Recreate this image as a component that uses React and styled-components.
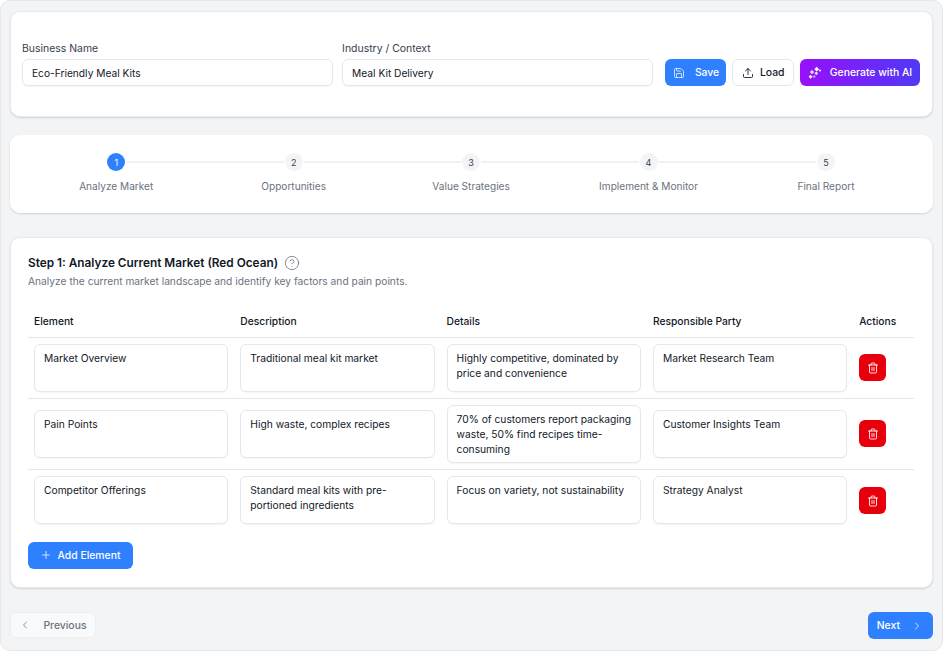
import React from 'react';
import styled, { createGlobalStyle } from 'styled-components';
import { Save, Upload, CircleHelp, Trash2, Plus, ChevronLeft, ChevronRight } from 'lucide-react';

const GlobalStyle = createGlobalStyle`
  html, body { margin: 0; padding: 0; background: #fff; }
  body { font-family: Inter, 'Liberation Sans', sans-serif; font-size: 11px; color: #111827; }
  * { box-sizing: border-box; }
`;

const Page = styled.div`
  width: 943px;
  height: 651px;
  background: #f3f4f6;
  border: 1px solid #e5e7eb;
  border-radius: 10px;
  padding: 10px 9.3px 12px 8.5px;
  overflow: hidden;
`;

const Card = styled.section`
  background: #fff;
  border-radius: 10px;
  border: 1px solid #e9eaee;
  box-shadow: 0 1px 2px rgba(0, 0, 0, 0.14);
`;

const Header = styled(Card)`
  height: 106px;
  padding: 0 11.5px 30px 11.5px;
  display: flex;
  align-items: flex-end;
  gap: 12px;
`;

const Fields = styled.div`
  flex: 1;
  display: flex;
  gap: 9px;
`;

const Field = styled.label`
  flex: 1;
  display: flex;
  flex-direction: column;
  gap: 2px;
  font-size: 10.45px;
  line-height: 16px;
  color: #374151;
`;

const TextInput = styled.input`
  height: 27px;
  border: 1px solid #e5e7eb;
  border-radius: 6px;
  padding: 0 9px;
  font: 10.2px Inter, sans-serif;
  color: #111827;
  box-shadow: 0 1px 1px rgba(0, 0, 0, 0.04);
  outline: none;
`;

const Actions = styled.div`
  display: flex;
  gap: 6px;
`;

const Button = styled.button`
  height: 27px;
  border-radius: 6px;
  border: ${p => (p.$variant === 'white' ? '1px solid #e5e7eb' : 'none')};
  padding: ${p => p.$pad || '0 8px'};
  display: inline-flex;
  align-items: center;
  justify-content: ${p => (p.$variant === 'white' ? 'center' : 'space-between')};
  gap: ${p => p.$gap || 6}px;
  width: ${p => p.$width}px;
  font: 500 10.4px Inter, sans-serif;
  color: ${p => (p.$variant === 'white' ? '#111827' : '#fff')};
  background: ${p =>
    p.$variant === 'white' ? '#fff' : p.$variant === 'ai' ? 'linear-gradient(90deg, #9810fa, #4f39f6)' : '#2f80ff'};
`;

const Steps = styled(Card)`
  margin-top: 18px;
  height: 78px;
  padding: 17px 17px 0;
  border-color: #fff;
  display: flex;
`;

const Step = styled.div`
  position: relative;
  flex: 1;
  display: flex;
  flex-direction: column;
  align-items: center;
  gap: 8px;
`;

const Connector = styled.span`
  position: absolute;
  top: 8px;
  left: calc(50% + 10px);
  width: calc(100% - 20px);
  height: 2px;
  background: #f0f1f3;
`;

const Dot = styled.span`
  width: 18px;
  height: 18px;
  border-radius: 50%;
  display: flex;
  align-items: center;
  justify-content: center;
  font-size: 9px;
  background: ${p => (p.$active ? '#2f80ff' : '#f3f4f6')};
  color: ${p => (p.$active ? '#fff' : '#374151')};
`;

const StepLabel = styled.span`
  font-size: 10.1px;
  line-height: 14px;
  color: #6b7280;
`;

const Main = styled(Card)`
  margin-top: 24px;
  height: 351px;
  padding: 16px 17.5px;
`;

const TitleRow = styled.div`
  display: flex;
  align-items: center;
  gap: 6px;
`;

const Title = styled.h2`
  margin: 0;
  font-size: 11.8px;
  line-height: 18px;
  font-weight: 600;
`;

const Subtitle = styled.p`
  margin: 1px 0 0;
  font-size: 10.23px;
  line-height: 16px;
  color: #6b7280;
`;

const Table = styled.table`
  width: 886px;
  margin-top: 16px;
  border-collapse: collapse;
  table-layout: fixed;
`;

const Th = styled.th`
  text-align: left;
  font-size: 10.25px;
  font-weight: 500;
  color: #111827;
  height: 32px;
  padding: 1px 6px 0;
  border-bottom: 1px solid #e5e7eb;
`;

const Tr = styled.tr`
  border-bottom: 1px solid #e5e7eb;
  &:last-child { border-bottom: none; }
  &:last-child td { padding-bottom: 8px; }
  &:last-child td:last-child { padding: 7px 6px; }
`;

const Td = styled.td`
  padding: 6px;
  vertical-align: middle;
`;

const Area = styled.textarea`
  display: block;
  width: 100%;
  height: ${p => p.$height}px;
  resize: none;
  border: 1px solid #e5e7eb;
  border-radius: 6px;
  padding: 6px 6px 6px 9px;
  font: 10.25px/15px Inter, sans-serif;
  color: #111827;
  outline: none;
  overflow: hidden;
  box-shadow: 0 1px 1px rgba(0, 0, 0, 0.04);
`;

const DeleteButton = styled.button`
  width: 27px;
  height: 27px;
  border: none;
  border-radius: 6px;
  background: #e7000b;
  color: #fff;
  display: flex;
  align-items: center;
  justify-content: center;
  padding: 0;
`;

const AddButton = styled(Button)`
  margin-top: 10px;
  justify-content: center;
`;

const Footer = styled.div`
  margin-top: 24px;
  display: flex;
  justify-content: space-between;
`;

const PrevButton = styled.button`
  width: 86px;
  height: 26px;
  border: 1px solid #eceef1;
  border-radius: 6px;
  background: #f9fafb;
  color: #6b7280;
  padding: 0 8px;
  display: flex;
  align-items: center;
  justify-content: space-between;
  font: 500 10.4px Inter, sans-serif;
`;

const SparkIcon = () => (
  <svg width="14" height="14" viewBox="0 0 14 14" fill="currentColor">
    <rect x="7" y="1.5" width="3.4" height="3.4" transform="rotate(45 8.7 3.2)" />
    <rect x="2.5" y="4.6" width="3" height="3" transform="rotate(45 4 6.1)" opacity="0.85" />
    <rect x="7" y="6" width="2.6" height="2.6" transform="rotate(45 8.3 7.3)" opacity="0.85" />
    <rect x="1.2" y="9.4" width="2.8" height="2.8" transform="rotate(45 2.6 10.8)" />
    <rect x="5.2" y="9.6" width="2" height="2" transform="rotate(45 6.2 10.6)" opacity="0.7" />
    <circle cx="12" cy="4.5" r="1" />
  </svg>
);

const steps = ['Analyze Market', 'Opportunities', 'Value Strategies', 'Implement & Monitor', 'Final Report'];

const rows = [
  ['Market Overview', 'Traditional meal kit market', 'Highly competitive, dominated by price and convenience', 'Market Research Team'],
  ['Pain Points', 'High waste, complex recipes', '70% of customers report packaging waste, 50% find recipes time-consuming', 'Customer Insights Team'],
  ['Competitor Offerings', 'Standard meal kits with pre-portioned ingredients', 'Focus on variety, not sustainability', 'Strategy Analyst'],
];

export default function App() {
  return (
    <Page>
      <GlobalStyle />
      <Header>
        <Fields>
          <Field>
            Business Name
            <TextInput defaultValue="Eco-Friendly Meal Kits" />
          </Field>
          <Field>
            Industry / Context
            <TextInput defaultValue="Meal Kit Delivery" />
          </Field>
        </Fields>
        <Actions>
          <Button $width={61} $pad="0 7px 0 8px"><Save size={12} strokeWidth={1.5} />Save</Button>
          <Button $width={62} $variant="white"><Upload size={12} strokeWidth={1.75} />Load</Button>
          <Button $width={120} $variant="ai"><SparkIcon />Generate with AI</Button>
        </Actions>
      </Header>

      <Steps>
        {steps.map((label, i) => (
          <Step key={label}>
            {i < steps.length - 1 && <Connector />}
            <Dot $active={i === 0}>{i + 1}</Dot>
            <StepLabel>{label}</StepLabel>
          </Step>
        ))}
      </Steps>

      <Main>
        <TitleRow>
          <Title>Step 1: Analyze Current Market (Red Ocean)</Title>
          <CircleHelp size={16} strokeWidth={1.25} color="#6b7280" />
        </TitleRow>
        <Subtitle>Analyze the current market landscape and identify key factors and pain points.</Subtitle>
        <Table>
          <colgroup>
            <col span="4" style={{ width: 206.3 }} />
            <col />
          </colgroup>
          <thead>
            <tr>
              {['Element', 'Description', 'Details', 'Responsible Party', 'Actions'].map(h => <Th key={h}>{h}</Th>)}
            </tr>
          </thead>
          <tbody>
            {rows.map((row, r) => (
              <Tr key={row[0]}>
                {row.map((value, c) => (
                  <Td key={c}>
                    <Area $height={r === 1 && c === 2 ? 58 : 48} defaultValue={value} />
                  </Td>
                ))}
                <Td>
                  <DeleteButton><Trash2 size={12} strokeWidth={1.75} /></DeleteButton>
                </Td>
              </Tr>
            ))}
          </tbody>
        </Table>
        <AddButton $width={105} $gap={5}><Plus size={12} strokeWidth={1.5} />Add Element</AddButton>
      </Main>

      <Footer>
        <PrevButton><ChevronLeft size={12} strokeWidth={1.5} />Previous</PrevButton>
        <Button $width={65} $pad="0 10px 0 9px">Next<ChevronRight size={12} strokeWidth={1.5} /></Button>
      </Footer>
    </Page>
  );
}
